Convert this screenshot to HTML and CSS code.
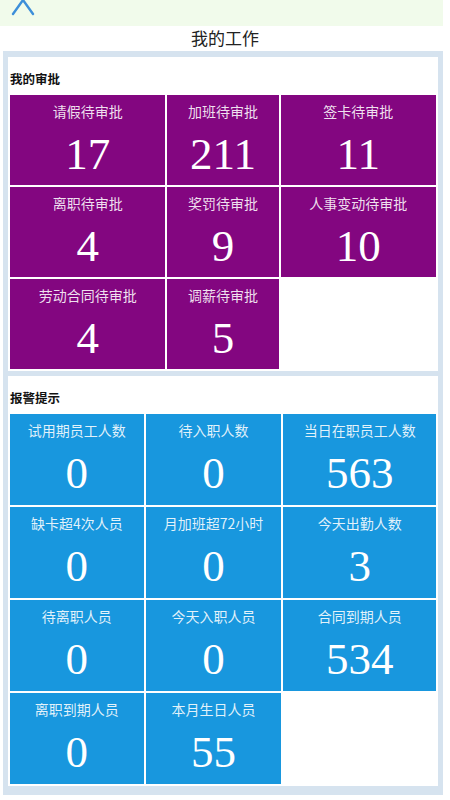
FILE: index.html
```html
<!DOCTYPE html>
<html lang="zh-CN">
  <head>
    <meta charset="UTF-8" />
    <meta name="viewport" content="width=device-width, initial-scale=1.0" />
    <title>我的工作</title>
    <link rel="stylesheet" href="styles.css">
  </head>
  <body>
    <div class="topbar">
      <svg class="back-icon" width="40" height="26" viewBox="0 0 40 26">
        <polyline points="13,14 23,0 33,14" fill="none" stroke="#3d8fd9" stroke-width="2.4" stroke-linecap="round" />
      </svg>
    </div>
    <div class="page-title">我的工作</div>

    <div class="frame">
      <!-- 我的审批 -->
      <div class="panel">
        <div class="panel-title">我的审批</div>
        <table class="tiles tiles-purple">
          <tr>
            <td><div class="label">请假待审批</div><div class="num">17</div></td>
            <td><div class="label">加班待审批</div><div class="num">211</div></td>
            <td><div class="label">签卡待审批</div><div class="num">11</div></td>
          </tr>
          <tr>
            <td><div class="label">离职待审批</div><div class="num">4</div></td>
            <td><div class="label">奖罚待审批</div><div class="num">9</div></td>
            <td><div class="label">人事变动待审批</div><div class="num">10</div></td>
          </tr>
          <tr>
            <td><div class="label">劳动合同待审批</div><div class="num">4</div></td>
            <td><div class="label">调薪待审批</div><div class="num">5</div></td>
            <td class="empty"></td>
          </tr>
        </table>
      </div>

      <!-- 报警提示 -->
      <div class="panel">
        <div class="panel-title">报警提示</div>
        <table class="tiles tiles-blue">
          <tr>
            <td><div class="label">试用期员工人数</div><div class="num">0</div></td>
            <td><div class="label">待入职人数</div><div class="num">0</div></td>
            <td><div class="label">当日在职员工人数</div><div class="num">563</div></td>
          </tr>
          <tr>
            <td><div class="label">缺卡超4次人员</div><div class="num">0</div></td>
            <td><div class="label">月加班超72小时</div><div class="num">0</div></td>
            <td><div class="label">今天出勤人数</div><div class="num">3</div></td>
          </tr>
          <tr>
            <td><div class="label">待离职人员</div><div class="num">0</div></td>
            <td><div class="label">今天入职人员</div><div class="num">0</div></td>
            <td><div class="label">合同到期人员</div><div class="num">534</div></td>
          </tr>
          <tr>
            <td><div class="label">离职到期人员</div><div class="num">0</div></td>
            <td><div class="label">本月生日人员</div><div class="num">55</div></td>
            <td class="empty"></td>
          </tr>
        </table>
      </div>
    </div>
  </body>
</html>
```

FILE: styles.css
```css
body {
  margin: 0;
  background: #fff;
  font-family: "Noto Sans CJK SC", "Noto Sans", sans-serif;
  color: #222;
}

/* Top bar */
.topbar {
  width: 443px;
  height: 26px;
  background: #f1fbeb;
}

.back-icon {
  display: block;
}

.page-title {
  height: 25px;
  line-height: 24px;
  text-align: center;
  font-size: 17px;
  color: #222;
}

/* Outer light-blue frame */
.frame {
  margin: 0 7px 0 3px;
  padding: 6px 5px 9px;
  background: #d6e3ef;
}

.panel {
  background: #fff;
  margin-bottom: 5px;
}

.panel:last-child {
  margin-bottom: 0;
}

.panel-title {
  padding: 12px 0 0 2px;
  height: 24px;
  font-size: 12.5px;
  font-weight: bold;
  color: #111;
}

/* Tile tables */
.tiles {
  width: 100%;
  border-collapse: separate;
  border-spacing: 2px;
}

.tiles td {
  height: 90px;
  padding: 0;
  vertical-align: top;
  text-align: center;
  color: #fff;
  white-space: nowrap;
}

.tiles-purple td {
  background: #830680;
}

.tiles-blue td {
  background: #1897de;
  height: 91px;
}

.tiles td.empty {
  background: #fff;
}

.label {
  padding-top: 6px;
  font-size: 14px;
  line-height: 20px;
  color: rgba(255, 255, 255, 0.88);
}

.num {
  margin-top: 7px;
  font-family: "Liberation Serif", "DejaVu Serif", serif;
  font-size: 45px;
  line-height: 52px;
}
```
